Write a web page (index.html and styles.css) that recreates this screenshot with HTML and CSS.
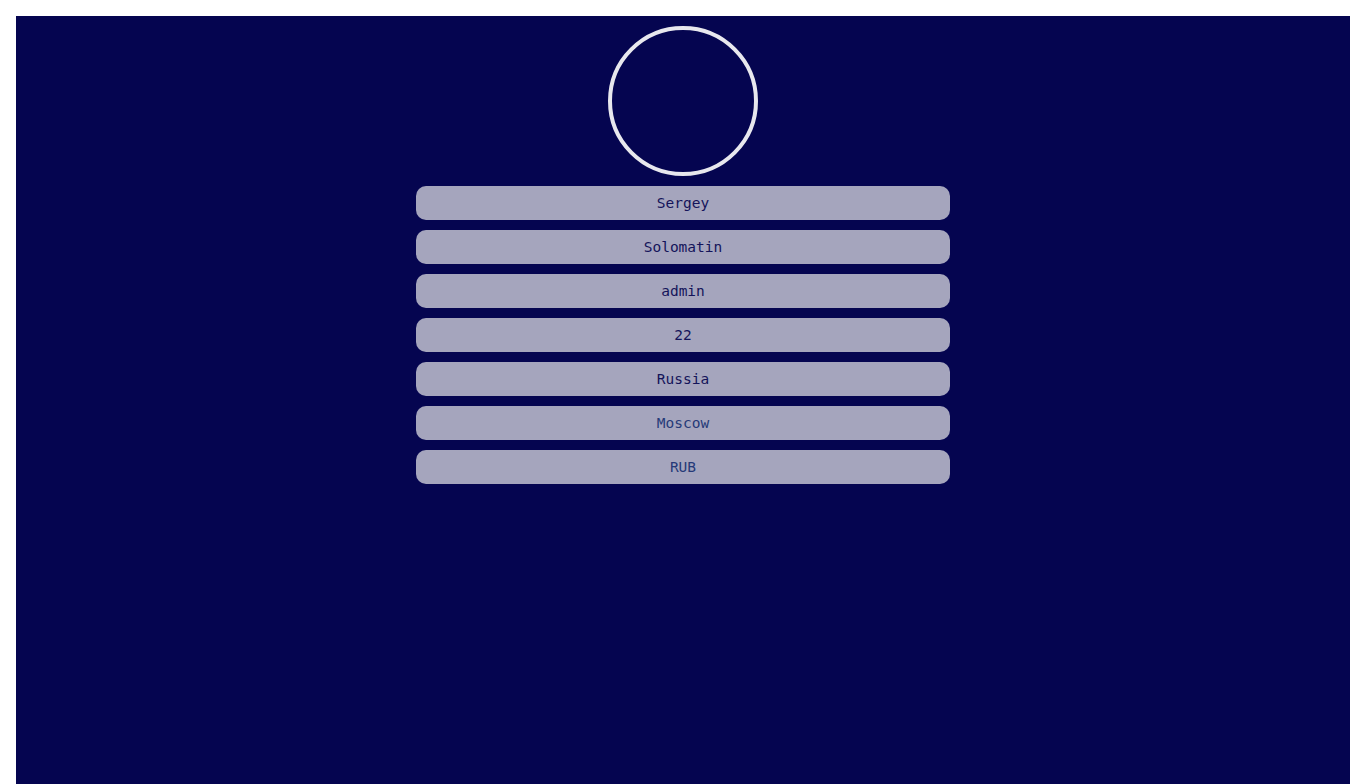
FILE: index.html
```
<!DOCTYPE html>
<html lang="en">
<head>
<meta charset="utf-8">
<title>Profile</title>
<link rel="stylesheet" href="styles.css">
</head>
<body>
<main class="panel">
  <div class="avatar"></div>
  <div class="fields">
    <div class="field">Sergey</div>
    <div class="field">Solomatin</div>
    <div class="field">admin</div>
    <div class="field">22</div>
    <div class="field">Russia</div>
    <div class="field field-alt">Moscow</div>
    <div class="field field-alt">RUB</div>
  </div>
</main>
</body>
</html>
```
FILE: styles.css
```
html, body {
  margin: 0;
  padding: 0;
  background: #ffffff;
  height: 100%;
}
body {
  overflow: hidden;
}
.panel {
  margin: 16px 0 0 16px;
  min-height: calc(100vh - 16px);
  background: #050550;
  box-sizing: border-box;
  padding-top: 10px;
  display: flex;
  flex-direction: column;
  align-items: center;
  gap: 10px;
}
.avatar {
  width: 150px;
  height: 150px;
  box-sizing: border-box;
  border: 4px solid #e8e8ee;
  border-radius: 50%;
}
.fields {
  display: flex;
  flex-direction: column;
  gap: 10px;
  width: 534px;
}
.field {
  height: 34px;
  border-radius: 10px;
  background: #a5a5bd;
  color: #14145a;
  font-family: "DejaVu Sans Mono", "Liberation Mono", monospace;
  font-size: 14.5px;
  display: flex;
  align-items: center;
  justify-content: center;
}
.field-alt {
  color: #263a78;
}
```
